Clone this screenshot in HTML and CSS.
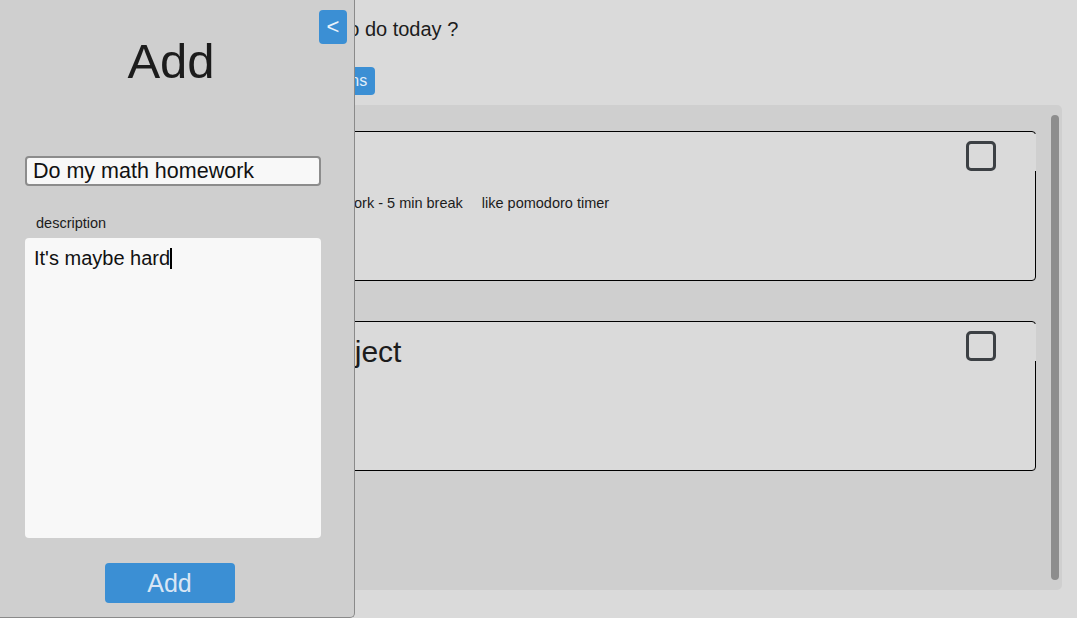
FILE: index.html
```html
<!DOCTYPE html>
<html lang="en">
<head>
<meta charset="utf-8">
<title>Todo</title>
<link rel="stylesheet" href="styles.css">
</head>
<body>
<div class="app">
  <main class="main">
    <h1 class="question">What do you want to do today ?</h1>
    <div class="toolbar"><button class="btn">Options</button></div>
    <section class="panel">
      <div class="list">
        <article class="card">
          <h2 class="card-title">Study</h2>
          <p class="card-desc"><span>25 min work - 5 min break</span><span>like pomodoro timer</span></p>
          <div class="card-check"><span class="checkbox"></span></div>
        </article>
        <article class="card">
          <h2 class="card-title">Finish the project</h2>
          <div class="card-check"><span class="checkbox"></span></div>
        </article>
      </div>
      <div class="scrollbar"></div>
    </section>
  </main>
  <aside class="sidebar">
    <button class="collapse">&lt;</button>
    <h2 class="side-title">Add</h2>
    <input class="field" type="text" value="Do my math homework">
    <label class="label">description</label>
    <div class="area">It's maybe hard<span class="caret"></span></div>
    <button class="add-btn">Add</button>
  </aside>
</div>
</body>
</html>
```
FILE: styles.css
```css
* { box-sizing: border-box; }
html, body {
  margin: 0;
  height: 618px;
  overflow: hidden;
}
body {
  background: #dadada;
  font-family: "Liberation Sans", Arial, sans-serif;
  color: #1c1c1c;
}
.app { position: relative; height: 618px; }

.question {
  margin: 0;
  padding: 18px 0 0 177px;
  font-size: 20px;
  line-height: 23px;
  font-weight: normal;
}
.toolbar {
  margin-top: 26px;
  padding-left: 304px;
  height: 28px;
  display: flex;
}
.btn {
  height: 28px;
  padding: 0 8px;
  border: none;
  border-radius: 4px;
  background: #3b8fd4;
  color: #e3eef9;
  font-family: "Liberation Sans", Arial, sans-serif;
  font-size: 16px;
}
.panel {
  margin: 10px 15px 0 16px;
  height: 485px;
  background: #cfcfcf;
  border-radius: 5px;
  display: flex;
}
.list {
  flex: 1;
  padding: 26px 15px 0 20px;
  display: flex;
  flex-direction: column;
  gap: 40px;
}
.card {
  position: relative;
  height: 150px;
  border: 1px solid #000;
  border-radius: 4px;
  background: #dadada;
  padding: 13px 0 0 136px;
}
.card-title {
  margin: 0;
  font-size: 30px;
  line-height: 34px;
  font-weight: normal;
}
.card-desc {
  margin: 16px 0 0 123px;
  font-size: 14.5px;
  line-height: 17px;
  display: flex;
  gap: 19px;
}
.card-check {
  position: absolute;
  top: 2px;
  right: -1px;
  width: 70px;
  height: 37px;
  background: #dadada;
  display: flex;
  justify-content: flex-end;
  padding: 7px 40px 0 0;
}
.checkbox {
  width: 30px;
  height: 30px;
  border: 3px solid #3c4044;
  border-radius: 5px;
}
.scrollbar {
  width: 8px;
  margin: 10px 3px 10px 0;
  background: #8d8d8d;
  border-radius: 4px;
}

.sidebar {
  position: absolute;
  left: 0;
  top: 0;
  width: 355px;
  height: 618px;
  background: #cfcfcf;
  border-right: 1px solid #8a8a8a;
  border-bottom: 1px solid #8a8a8a;
  border-bottom-right-radius: 5px;
  padding: 0 33px 0 25px;
  display: flex;
  flex-direction: column;
}
.collapse {
  position: absolute;
  top: 10px;
  right: 7px;
  width: 28px;
  height: 34px;
  padding: 0;
  border: none;
  border-radius: 4px;
  background: #3b8fd4;
  color: #eaf2fb;
  font-family: "Liberation Sans", Arial, sans-serif;
  font-size: 22px;
  line-height: 34px;
}
.side-title {
  margin: 33px 4px 0 0;
  font-size: 49px;
  line-height: 56px;
  font-weight: normal;
  text-align: center;
}
.field {
  margin-top: 67px;
  width: 296px;
  height: 30px;
  border: 2px solid #8c8c8c;
  border-radius: 4px;
  background: #f8f8f8;
  padding: 0 6px;
  font-family: "Liberation Sans", Arial, sans-serif;
  font-size: 21.5px;
  color: #111;
  outline: none;
}
.label {
  margin: 29px 0 0 11px;
  font-size: 14.5px;
  line-height: 17px;
}
.area {
  margin-top: 6px;
  width: 296px;
  height: 300px;
  background: #f8f8f8;
  border-radius: 4px;
  padding: 9px 9px;
  font-size: 20px;
  line-height: 23px;
  color: #111;
}
.caret {
  display: inline-block;
  width: 2px;
  height: 21px;
  background: #000;
  vertical-align: -4px;
}
.add-btn {
  align-self: center;
  margin: 25px 7px 0 0;
  width: 130px;
  height: 40px;
  border: none;
  border-radius: 4px;
  background: #3b8fd4;
  color: #d8e6f5;
  font-family: "Liberation Sans", Arial, sans-serif;
  font-size: 25px;
}
```
